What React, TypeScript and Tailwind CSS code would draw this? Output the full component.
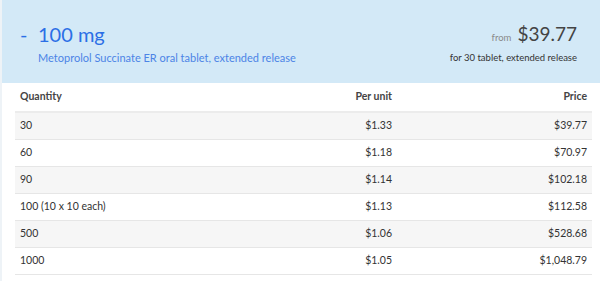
const rows = [
  { qty: "30", unit: "$1.33", price: "$39.77" },
  { qty: "60", unit: "$1.18", price: "$70.97" },
  { qty: "90", unit: "$1.14", price: "$102.18" },
  { qty: "100 (10 x 10 each)", unit: "$1.13", price: "$112.58" },
  { qty: "500", unit: "$1.06", price: "$528.68" },
  { qty: "1000", unit: "$1.05", price: "$1,048.79" },
];

export default function App() {
  return (
    <div className="w-[600px] h-[281px] bg-white font-['Lato',sans-serif] border-l-2 border-[#eef3f7]">
      <div className="h-[83px] bg-[#d3e9f7] flex justify-between pl-[18px] pr-[23px] pt-[22px]">
        <div>
          <div className="flex items-baseline text-[#2b6fe6] text-[20px] leading-[24px]">
            <span className="w-[18px]">-</span>
            <span>100 mg</span>
          </div>
          <div className="pl-[18px] mt-[4px] text-[11px] text-[#4c84e6]">
            Metoprolol Succinate ER oral tablet, extended release
          </div>
        </div>
        <div className="flex flex-col items-end">
          <div className="flex items-baseline gap-[6px] leading-[24px]">
            <span className="text-[9.5px] text-[#8a8a8a]">from</span>
            <span className="text-[19px] text-[#444]">$39.77</span>
          </div>
          <div className="mt-[1px] text-[9.5px] text-[#333]">for 30 tablet, extended release</div>
        </div>
      </div>
      <div className="pl-[13px] pr-[8px]">
        <table className="w-full border-collapse text-[10.5px] text-[#333]">
          <thead>
            <tr className="h-[29px] border-b-2 border-[#ececec]">
              <th className="text-left font-bold text-[#444] pl-[5px]">Quantity</th>
              <th className="text-right font-bold text-[#444] w-[195px] pr-[5px]">Per unit</th>
              <th className="text-right font-bold text-[#444] w-[195px] pr-[5px]">Price</th>
            </tr>
          </thead>
          <tbody>
            {rows.map((r, i) => (
              <tr key={r.qty} className={`h-[27px] border-b border-[#e6e6e6] ${i % 2 === 0 ? "bg-[#f6f6f6]" : "bg-white"}`}>
                <td className="pl-[5px]">{r.qty}</td>
                <td className="text-right pr-[5px]">{r.unit}</td>
                <td className="text-right pr-[5px]">{r.price}</td>
              </tr>
            ))}
          </tbody>
        </table>
      </div>
    </div>
  );
}
